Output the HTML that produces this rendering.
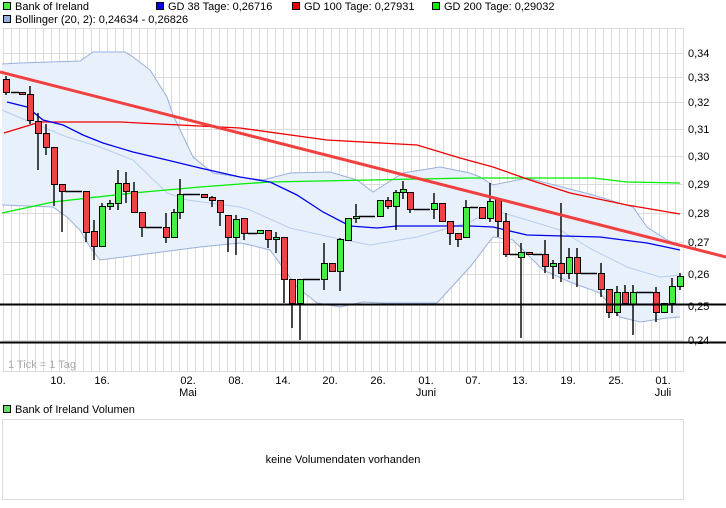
<!DOCTYPE html>
<html><head><meta charset="utf-8"><style>
html,body{margin:0;padding:0;background:#fff;width:726px;height:508px;overflow:hidden}
svg{display:block;font-family:"Liberation Sans",sans-serif;font-size:11px}
.r{fill:#f04444;stroke:#000;stroke-width:1}
.g{fill:#44ee44;stroke:#000;stroke-width:1}
.w{stroke:#000;stroke-width:1.4}
</style></head><body>
<svg width="726" height="508" viewBox="0 0 726 508" xmlns="http://www.w3.org/2000/svg">
<!-- legend -->
<rect x="3.5" y="2.5" width="7" height="7" fill="#44ee44" stroke="#000"/>
<text x="15" y="10">Bank of Ireland</text>
<rect x="156.5" y="2.5" width="7" height="7" fill="#0000ee" stroke="#000"/>
<text x="168" y="10">GD 38 Tage: 0,26716</text>
<rect x="292.5" y="2.5" width="7" height="7" fill="#ee0000" stroke="#000"/>
<text x="304" y="10">GD 100 Tage: 0,27931</text>
<rect x="432.5" y="2.5" width="7" height="7" fill="#00ee00" stroke="#000"/>
<text x="444" y="10">GD 200 Tage: 0,29032</text>
<rect x="3.5" y="15.5" width="7" height="7" fill="#9ab0dc" stroke="#000"/>
<text x="15" y="23">Bollinger (20, 2): 0,24634 - 0,26826</text>

<!-- grid -->
<g stroke="#dcdcdc" stroke-width="1">
<path d="M3.5 28V372M11.5 28V372M19.5 28V372M27.5 28V372M35.5 28V372M43.5 28V372M51.5 28V372M59.5 28V372M67.5 28V372M75.5 28V372M83.5 28V372M91.5 28V372M99.5 28V372M107.5 28V372M115.5 28V372M123.5 28V372M131.5 28V372M139.5 28V372M147.5 28V372M155.5 28V372M163.5 28V372M171.5 28V372M179.5 28V372M187.5 28V372M195.5 28V372M203.5 28V372M211.5 28V372M219.5 28V372M227.5 28V372M235.5 28V372M243.5 28V372M251.5 28V372M259.5 28V372M267.5 28V372M275.5 28V372M283.5 28V372M291.5 28V372M299.5 28V372M307.5 28V372M315.5 28V372M323.5 28V372M331.5 28V372M339.5 28V372M347.5 28V372M355.5 28V372M363.5 28V372M371.5 28V372M379.5 28V372M387.5 28V372M395.5 28V372M403.5 28V372M411.5 28V372M419.5 28V372M427.5 28V372M435.5 28V372M443.5 28V372M451.5 28V372M459.5 28V372M467.5 28V372M475.5 28V372M483.5 28V372M491.5 28V372M499.5 28V372M507.5 28V372M515.5 28V372M523.5 28V372M531.5 28V372M539.5 28V372M547.5 28V372M555.5 28V372M563.5 28V372M571.5 28V372M579.5 28V372M587.5 28V372M595.5 28V372M603.5 28V372M611.5 28V372M619.5 28V372M627.5 28V372M635.5 28V372M643.5 28V372M651.5 28V372M659.5 28V372M667.5 28V372M675.5 28V372M683.5 28V372"/>
<path d="M2 28.5H684M2 53.5H684M2 77.5H684M2 102.5H684M2 129.5H684M2 156.5H684M2 184.5H684M2 213.5H684M2 242.5H684M2 274.5H684M2 340.5H684M2 371.5H684"/>
</g>

<!-- bollinger band -->
<polygon fill="#e8f0fc" points="2,64 20,63 80,61 93,52 125,52 133,57 150,70 167,97 173,115 193,157 213,173 240,177 263,180 290,173 330,172 357,180 373,192 403,173 440,167 470,173 480,177 493,185 527,178 593,195 633,207 647,227 667,240 680,245 680,317 667,318 640,322 620,317 600,293 570,282 543,270 513,240 493,237 470,267 437,303 383,303 363,302 340,307 317,303 297,287 270,250 250,245 240,243 200,247 100,260 90,247 80,230 67,217 53,207 2,205"/>
<polyline fill="none" stroke="#9ab0dc" points="2,64 20,63 80,61 93,52 125,52 133,57 150,70 167,97 173,115 193,157 213,173 240,177 263,180 290,173 330,172 357,180 373,192 403,173 440,167 470,173 480,177 493,185 527,178 593,195 633,207 647,227 667,240 680,245"/>
<polyline fill="none" stroke="#9ab0dc" points="680,317 667,318 640,322 620,317 600,293 570,282 543,270 513,240 493,237 470,267 437,303 383,303 363,302 340,307 317,303 297,287 270,250 250,245 240,243 200,247 100,260 90,247 80,230 67,217 53,207 2,205"/>
<polyline fill="none" stroke="#b8cdf0" points="2,110 30,122 67,137 100,147 133,160 167,193 187,200 240,207 250,210 290,228 330,237 370,245 417,237 470,222 493,210 527,220 560,230 593,250 627,267 660,277 680,275"/>

<!-- moving averages -->
<polyline fill="none" stroke="#00ee00" stroke-width="1.3" points="2,213 53,202 133,193 200,187 240,184 270,182 470,178 593,178 627,182 680,183"/>
<polyline fill="none" stroke="#ee0000" stroke-width="1.3" points="4,133 40,122 120,122 240,128 327,140 417,145 460,158 493,167 530,180 570,193 627,205 680,214"/>
<polyline fill="none" stroke="#0000ee" stroke-width="1.3" points="7,102 27,107 43,120 63,125 83,135 103,143 133,152 167,160 200,168 240,177 270,182 297,195 323,212 350,226 377,228 397,226 470,226 493,227 527,235 600,237 647,243 680,250"/>

<!-- candles -->
<g class="w">
<path d="M6 76V95M30 86V124M38 113V170M46 124V155M54 147V206M62 184V232M86 191V242M94 220V260M102 203V246M110 200V210M118 170V210M126 172V203M134 182V212M142 212V237M166 213V243M174 209V237M180 179V219M212 196V207M220 200V226M228 215V252M236 215V255M244 218V240M268 230V248M276 232V253M284 237V303M292 279V328M300 279V340M324 243V290M340 238V291M356 204V223M388 197V209M396 190V230M403 181V199M410 192V213M434 193V219M450 221V245M458 233V247M466 200V237M490 183V222M498 199V237M506 213V257M521 243V338M545 240V273M553 260V279M561 203V282M569 248V279M577 248V287M601 263V297M609 289V318M617 286V316M625 285V303M633 285V335M656 287V322M664 303V312M672 278V313M680 273V290"/>
<path d="M11 92.5H19M65 191.5H82M145 227.5H162M183 194.5H200M248 233.5H257M303 279.5H320M359 216.5H375M414 209.5H430M470 207.5H478M510 254.5H518M533 254.5H542M581 273.5H597M636 292.5H653"/>
</g>
<g>
<rect class="r" x="3.5" y="79.5" width="6" height="13"/>
<rect class="r" x="19.5" y="92.5" width="6" height="2"/>
<rect class="r" x="27.5" y="94.5" width="6" height="26"/>
<rect class="r" x="35.5" y="121.5" width="6" height="12"/>
<rect class="r" x="43.5" y="133.5" width="6" height="14"/>
<rect class="r" x="51.5" y="147.5" width="6" height="37"/>
<rect class="r" x="59.5" y="184.5" width="6" height="7"/>
<rect class="r" x="83.5" y="191.5" width="6" height="41"/>
<rect class="r" x="91.5" y="231.5" width="6" height="15"/>
<rect class="g" x="99.5" y="206.5" width="6" height="40"/>
<rect class="g" x="107.5" y="203.5" width="6" height="3"/>
<rect class="g" x="115.5" y="183.5" width="6" height="20"/>
<rect class="r" x="123.5" y="183.5" width="6" height="8"/>
<rect class="r" x="131.5" y="191.5" width="6" height="21"/>
<rect class="r" x="139.5" y="212.5" width="6" height="15"/>
<rect class="r" x="163.5" y="227.5" width="6" height="10"/>
<rect class="g" x="171.5" y="212.5" width="6" height="25"/>
<rect class="g" x="177.5" y="194.5" width="6" height="18"/>
<rect class="r" x="201.5" y="194.5" width="6" height="3"/>
<rect class="r" x="209.5" y="197.5" width="6" height="3"/>
<rect class="r" x="217.5" y="200.5" width="6" height="12"/>
<rect class="r" x="225.5" y="215.5" width="6" height="22"/>
<rect class="g" x="233.5" y="219.5" width="6" height="18"/>
<rect class="r" x="241.5" y="218.5" width="6" height="15"/>
<rect class="g" x="257.5" y="230.5" width="6" height="3"/>
<rect class="r" x="265.5" y="230.5" width="6" height="9"/>
<rect class="g" x="273.5" y="237.5" width="6" height="2"/>
<rect class="r" x="281.5" y="237.5" width="6" height="42"/>
<rect class="r" x="289.5" y="279.5" width="6" height="24"/>
<rect class="g" x="297.5" y="279.5" width="6" height="24"/>
<rect class="g" x="321.5" y="263.5" width="6" height="16"/>
<rect class="r" x="329.5" y="263.5" width="6" height="8"/>
<rect class="g" x="337.5" y="239.5" width="6" height="32"/>
<rect class="g" x="345.5" y="218.5" width="6" height="22"/>
<rect class="g" x="353.5" y="216.5" width="6" height="2"/>
<rect class="g" x="377.5" y="200.5" width="6" height="16"/>
<rect class="r" x="385.5" y="200.5" width="6" height="6"/>
<rect class="g" x="393.5" y="192.5" width="6" height="14"/>
<rect class="g" x="400.5" y="189.5" width="6" height="3"/>
<rect class="r" x="407.5" y="192.5" width="6" height="17"/>
<rect class="g" x="431.5" y="203.5" width="6" height="6"/>
<rect class="r" x="439.5" y="203.5" width="6" height="18"/>
<rect class="r" x="447.5" y="221.5" width="6" height="12"/>
<rect class="r" x="455.5" y="233.5" width="6" height="6"/>
<rect class="g" x="463.5" y="207.5" width="6" height="30"/>
<rect class="r" x="479.5" y="207.5" width="6" height="11"/>
<rect class="g" x="487.5" y="201.5" width="6" height="17"/>
<rect class="r" x="495.5" y="199.5" width="6" height="22"/>
<rect class="r" x="503.5" y="221.5" width="6" height="33"/>
<rect class="g" x="518.5" y="252.5" width="6" height="5"/>
<rect class="r" x="526.5" y="252.5" width="6" height="2"/>
<rect class="r" x="542.5" y="254.5" width="6" height="12"/>
<rect class="g" x="550.5" y="263.5" width="6" height="3"/>
<rect class="r" x="558.5" y="263.5" width="6" height="10"/>
<rect class="g" x="566.5" y="257.5" width="6" height="16"/>
<rect class="r" x="574.5" y="257.5" width="6" height="16"/>
<rect class="r" x="598.5" y="273.5" width="6" height="16"/>
<rect class="r" x="606.5" y="289.5" width="6" height="23"/>
<rect class="g" x="614.5" y="292.5" width="6" height="20"/>
<rect class="r" x="622.5" y="292.5" width="6" height="11"/>
<rect class="g" x="630.5" y="292.5" width="6" height="12"/>
<rect class="r" x="653.5" y="292.5" width="6" height="20"/>
<rect class="g" x="661.5" y="303.5" width="6" height="9"/>
<rect class="g" x="669.5" y="286.5" width="6" height="17"/>
<rect class="g" x="677.5" y="276.5" width="6" height="10"/>
</g>

<!-- trend line -->
<line x1="0" y1="72" x2="726" y2="257" stroke="#f04040" stroke-width="3"/>
<!-- black horizontals -->
<line x1="0" y1="304.5" x2="726" y2="304.5" stroke="#000" stroke-width="2"/>
<line x1="0" y1="342.5" x2="726" y2="342.5" stroke="#000" stroke-width="2"/>

<!-- y labels -->
<g>
<text x="688" y="57">0,34</text>
<text x="688" y="81">0,33</text>
<text x="688" y="106">0,32</text>
<text x="688" y="133">0,31</text>
<text x="688" y="160">0,30</text>
<text x="688" y="188">0,29</text>
<text x="688" y="217">0,28</text>
<text x="688" y="246">0,27</text>
<text x="688" y="278">0,26</text>
<text x="688" y="310">0,25</text>
<text x="688" y="344">0,24</text>
</g>
<text x="8" y="368" fill="#aaa">1 Tick = 1 Tag</text>

<!-- x labels -->
<g text-anchor="middle">
<text x="58" y="384">10.</text>
<text x="102" y="384">16.</text>
<text x="188" y="384">02.</text>
<text x="188" y="396">Mai</text>
<text x="236" y="384">08.</text>
<text x="283" y="384">14.</text>
<text x="330" y="384">20.</text>
<text x="378" y="384">26.</text>
<text x="426" y="384">01.</text>
<text x="426" y="396">Juni</text>
<text x="473" y="384">07.</text>
<text x="520" y="384">13.</text>
<text x="568" y="384">19.</text>
<text x="616" y="384">25.</text>
<text x="663" y="384">01.</text>
<text x="663" y="396">Juli</text>
</g>

<!-- volume -->
<rect x="3.5" y="405.5" width="7" height="7" fill="#66dd66" stroke="#000"/>
<text x="15" y="413">Bank of Ireland Volumen</text>
<rect x="2.5" y="419.5" width="681" height="80" fill="#fff" stroke="#dcdcdc"/>
<text x="343" y="463" text-anchor="middle">keine Volumendaten vorhanden</text>
</svg>
</body></html>
